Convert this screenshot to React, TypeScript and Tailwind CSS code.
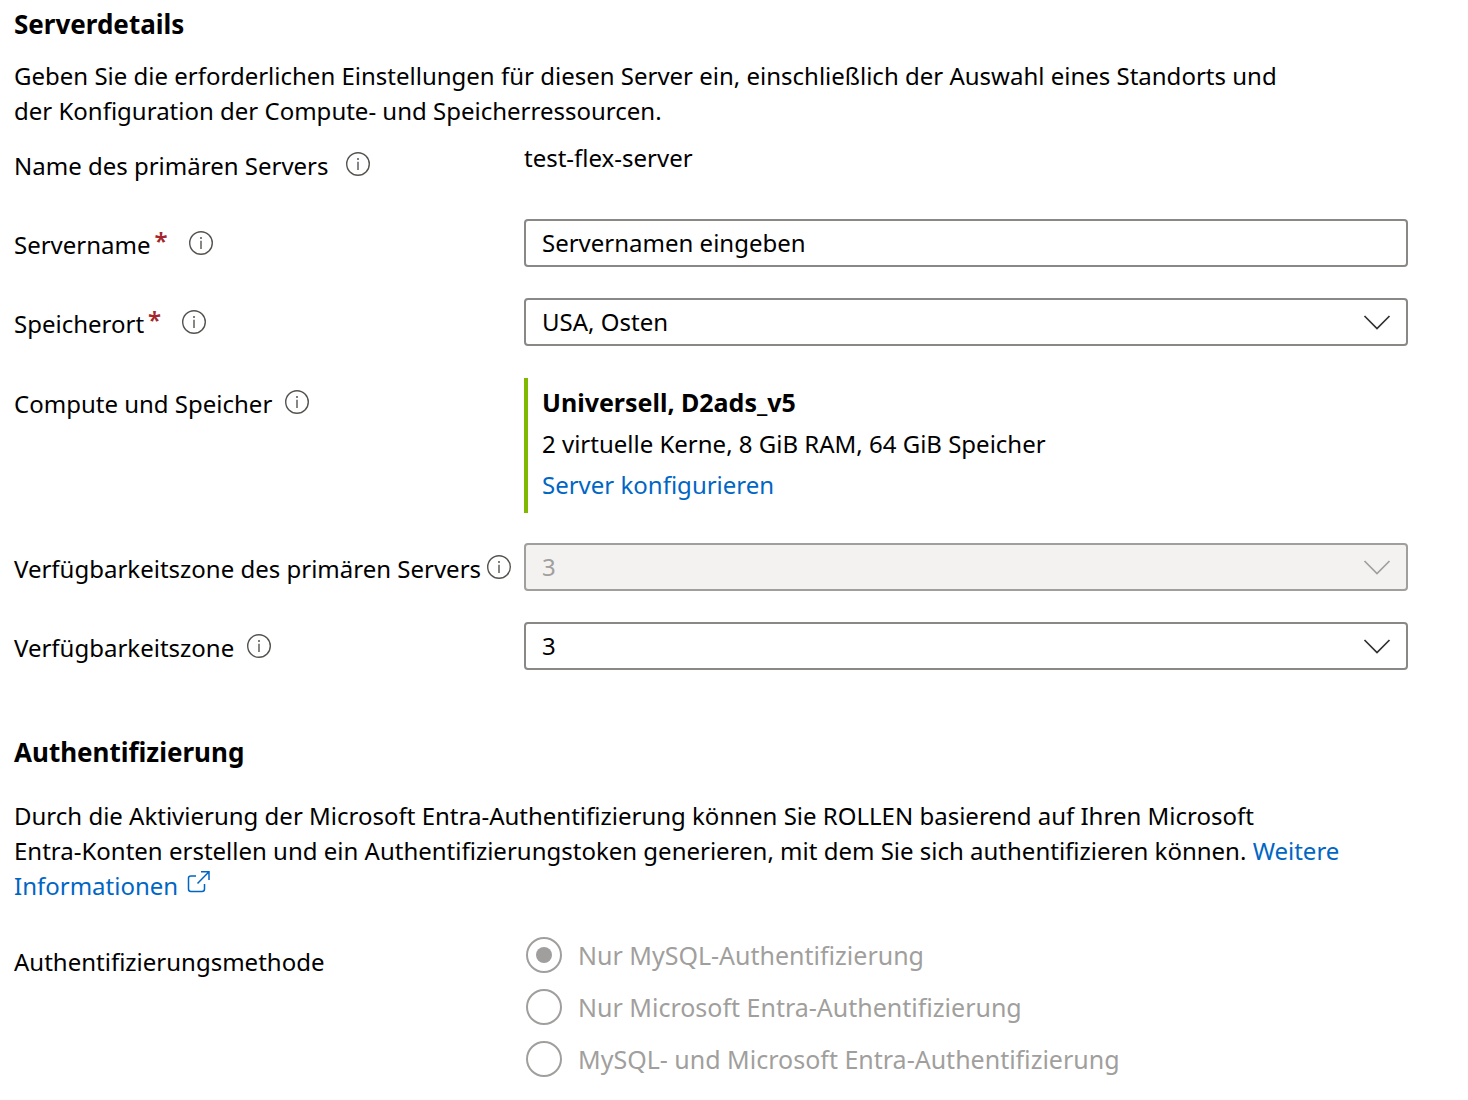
import React from 'react';

const InfoIcon: React.FC = () => (
  <svg viewBox="0 0 26 26" className="h-[26px] w-[26px] shrink-0" fill="none" stroke="#55534f" aria-hidden="true">
    <circle cx="13" cy="13" r="11.3" strokeWidth="1.4" />
    <path d="M13 10.800v8.200" strokeWidth="1.4" />
    <circle cx="13" cy="8" r="1" fill="#55534f" stroke="none" />
  </svg>
);

const Chevron: React.FC<{ color: string }> = ({ color }) => (
  <svg viewBox="0 0 28 16" className="pointer-events-none absolute top-4 right-[17px] h-4 w-7" fill="none" stroke={color} strokeWidth="1.7" aria-hidden="true">
    <path d="M1.500 2 14 14.500 26.500 2" />
  </svg>
);

interface LabelProps {
  text: string;
  htmlFor?: string;
  required?: boolean;
  /** Abstand zwischen Text und Info-Symbol */
  gap?: string;
}

const FieldLabel: React.FC<LabelProps> = ({ text, htmlFor, required = false, gap = 'gap-4' }) => (
  <div className={`flex h-12 w-[510px] shrink-0 items-center ${gap}`}>
    <label htmlFor={htmlFor} className="pt-[2px] whitespace-nowrap">
      {text}
      {required && <span className="ml-1 align-[4px] leading-none font-semibold text-[#a4262c]">*</span>}
    </label>
    <InfoIcon />
  </div>
);

interface SelectProps {
  id: string;
  value: string;
  disabled?: boolean;
}

const SelectField: React.FC<SelectProps> = ({ id, value, disabled = false }) => (
  <div className="relative flex-1">
    <select
      id={id}
      disabled={disabled}
      defaultValue={value}
      className="h-12 w-full appearance-none rounded-[4px] border-2 border-[#8a8886] bg-white px-4 pb-[2px] text-black opacity-100 disabled:border-[#a19f9d] disabled:bg-[#f3f2f1] disabled:text-[#a19f9d]"
    >
      <option>{value}</option>
    </select>
    <Chevron color={disabled ? '#a19f9d' : '#323130'} />
  </div>
);

const METHODS = ['Nur MySQL-Authentifizierung', 'Nur Microsoft Entra-Authentifizierung', 'MySQL- und Microsoft Entra-Authentifizierung'];

export default function App() {
  return (
    <main className="bg-white pt-1 pr-[60px] pb-4 pl-[14px] font-['Noto_Sans',sans-serif] text-[24px] leading-[35px] text-black">
      <h2 className="text-[26px] leading-10 font-bold">Serverdetails</h2>
      <p className="mt-[14px] max-w-[1290px]">
        Geben Sie die erforderlichen Einstellungen für diesen Server ein, einschließlich der Auswahl eines Standorts und der Konfiguration der Compute- und Speicherressourcen.
      </p>

      <div className="mt-3 flex">
        <FieldLabel text="Name des primären Servers" />
        <span>test-flex-server</span>
      </div>
      <div className="mt-[31px] flex">
        <FieldLabel text="Servername" htmlFor="servername" required gap="gap-5" />
        <input
          id="servername"
          type="text"
          placeholder="Servernamen eingeben"
          className="h-12 min-w-0 flex-1 rounded-[4px] border-2 border-[#8a8886] px-4 pb-[2px] placeholder:text-black"
        />
      </div>
      <div className="mt-[31px] flex">
        <FieldLabel text="Speicherort" htmlFor="speicherort" required gap="gap-5" />
        <SelectField id="speicherort" value="USA, Osten" />
      </div>
      <div className="mt-8 flex">
        <FieldLabel text="Compute und Speicher" gap="gap-3" />
        <div className="flex-1 border-l-4 border-[#7fba00] pt-[4px] pb-[8px] pl-[14px] leading-[41px]">
          <p className="text-[25px] font-bold">Universell, D2ads_v5</p>
          <p>2 virtuelle Kerne, 8 GiB RAM, 64 GiB Speicher</p>
          <a href="#" className="text-[#0066c4]">Server konfigurieren</a>
        </div>
      </div>
      <div className="mt-[30px] flex">
        <FieldLabel text="Verfügbarkeitszone des primären Servers" htmlFor="zone-primaer" gap="gap-[5px]" />
        <SelectField id="zone-primaer" value="3" disabled />
      </div>
      <div className="mt-[31px] flex">
        <FieldLabel text="Verfügbarkeitszone" htmlFor="zone" gap="gap-3" />
        <SelectField id="zone" value="3" />
      </div>

      <h2 className="mt-[62px] text-[26px] leading-10 font-bold">Authentifizierung</h2>
      <p className="mt-[26px] max-w-[1350px]">
        Durch die Aktivierung der Microsoft Entra-Authentifizierung können Sie ROLLEN basierend auf Ihren Microsoft{' '}
        <span className="whitespace-nowrap">Entra-Konten</span> erstellen und ein Authentifizierungstoken generieren, mit dem Sie sich authentifizieren können.{' '}
        <a href="#" className="text-[#0066c4]">
          Weitere Informationen
          <svg viewBox="0 0 24 24" className="ml-2 inline-block h-6 w-6 align-[1px]" fill="none" stroke="currentColor" strokeWidth="1.5" aria-hidden="true">
            <path d="M10 6H5Q2.500 6 2.500 8v11q0 2.500 2.500 2.500h11q2.500 0 2.500-2.500v-5M15 1.800h8V10M23 1.800 11.500 13.500" />
          </svg>
        </a>
      </p>

      <fieldset className="mt-[26px] flex" aria-labelledby="methode">
        <span id="methode" className="w-[510px] shrink-0 pt-[15px]">Authentifizierungsmethode</span>
        <div>
          {METHODS.map((m, i) => (
            <label key={m} className="flex h-[52px] items-center gap-4 pl-[2px] text-[25px] text-[#a19f9d]">
              <input
                type="radio"
                name="methode"
                disabled
                defaultChecked={i === 0}
                className="h-9 w-9 appearance-none rounded-full border-2 border-[#a19f9d] bg-clip-content p-2 checked:bg-[#a19f9d]"
              />
              {m}
            </label>
          ))}
        </div>
      </fieldset>
    </main>
  );
}
